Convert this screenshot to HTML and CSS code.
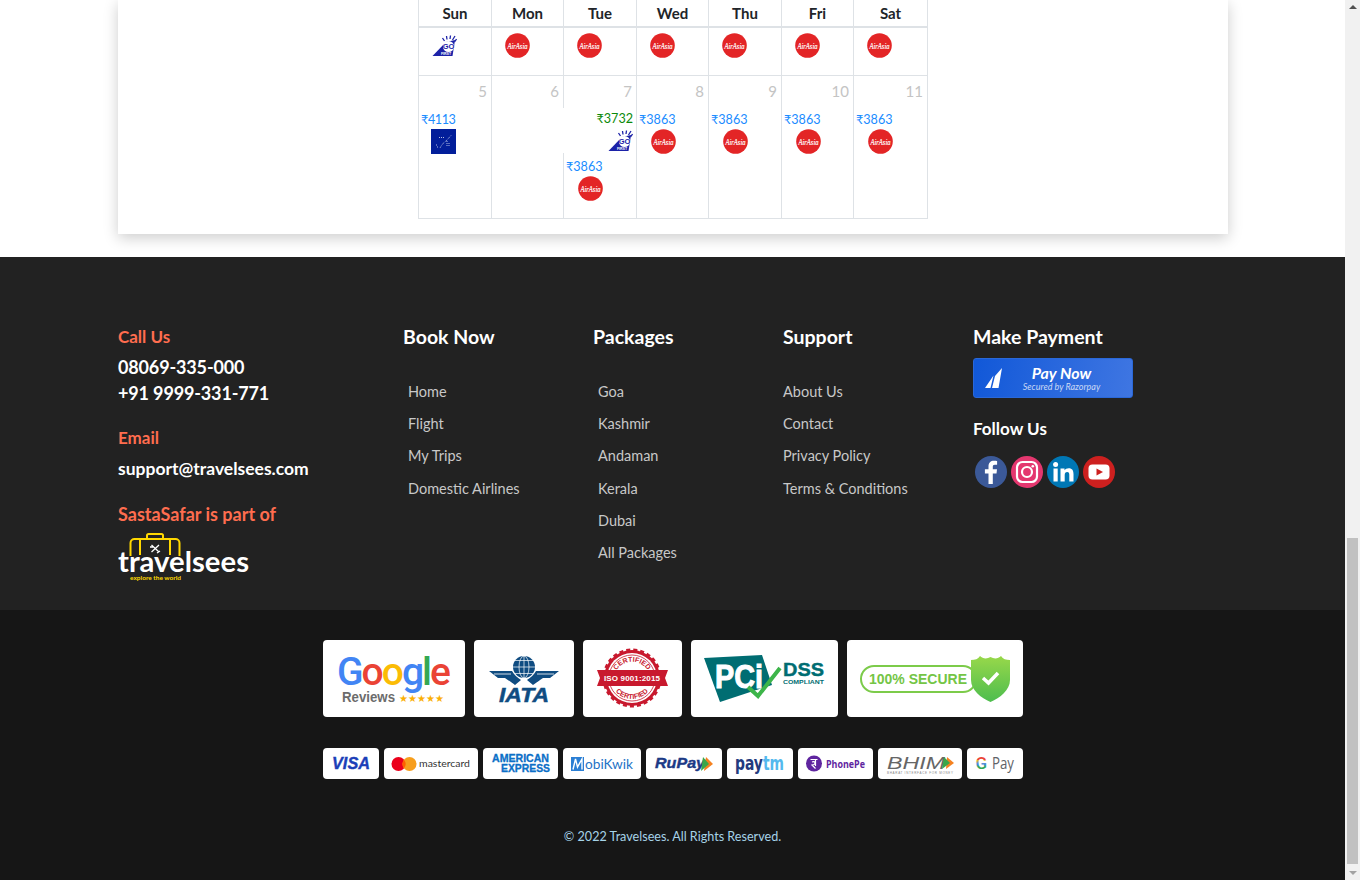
FILE: index.html
```html
<!DOCTYPE html>
<html lang="en">
<head>
    <meta charset="UTF-8">
    <meta name="viewport" content="width=device-width, initial-scale=1.0">
    <title>Travelsees - Fare Calendar</title>
    <link rel="stylesheet" href="styles.css">
</head>
<body>
    <svg class="defs" width="0" height="0">
        <symbol id="airasia" viewBox="0 0 25 25">
            <circle cx="12.500" cy="12.500" r="12.300" fill="#e32526"/>
            <text x="12.500" y="15.500" text-anchor="middle" font-size="9" font-style="italic" font-family="Liberation Serif" fill="#fff" stroke="#fff" stroke-width="0.200" textLength="20" lengthAdjust="spacingAndGlyphs">AirAsia</text>
        </symbol>
        <symbol id="gofirst" viewBox="0 0 25 25">
            <polygon points="0.500,23 20.500,23 23,7 14,9" fill="#1c22a8"/>
            <path d="M12.500 8 L10.500 5 M15 6.500 L14.500 3 M18 6 L18.500 2.500 M20.500 7 L23 3 M22.500 9 L24.500 6" stroke="#1c22a8" stroke-width="1.300"/>
            <circle cx="16.500" cy="13.500" r="5.500" fill="#fff"/>
            <text x="16.500" y="16" text-anchor="middle" font-size="7.500" font-weight="700" font-family="Liberation Sans" fill="#1c22a8">GO</text>
            <text x="14" y="22" text-anchor="middle" font-size="3.500" font-weight="700" font-family="Liberation Sans" fill="#fff">FIRST</text>
        </symbol>
        <symbol id="indigo" viewBox="0 0 25 25">
            <rect width="25" height="25" fill="#021e9a"/>
            <path d="M8 8.500 H14 M20 6.500 L16 11 L11 15.500 L9 19 M5 16 H7 M6 18 H7 M16 12 V18 M18 14 V18" stroke="#dfe4f5" stroke-width="0.800" stroke-dasharray="1 1" fill="none"/>
        </symbol>
    </svg>

    <div class="page">
        <main class="content">
            <section class="calendar-wrap">
                <div class="card">
                    <table class="fare-table">
                        <thead>
                            <tr>
                                <th>Sun</th><th>Mon</th><th>Tue</th><th>Wed</th><th>Thu</th><th>Fri</th><th>Sat</th>
                            </tr>
                        </thead>
                        <tbody>
                            <tr class="logo-row">
                                <td><svg class="airline"><use href="#gofirst"/></svg></td>
                                <td><svg class="airline"><use href="#airasia"/></svg></td>
                                <td><svg class="airline"><use href="#airasia"/></svg></td>
                                <td><svg class="airline"><use href="#airasia"/></svg></td>
                                <td><svg class="airline"><use href="#airasia"/></svg></td>
                                <td><svg class="airline"><use href="#airasia"/></svg></td>
                                <td><svg class="airline"><use href="#airasia"/></svg></td>
                            </tr>
                            <tr class="date-row">
                                <td>
                                    <div class="day">5</div>
                                    <div class="fare fare-tight"><span>₹4113</span><svg class="airline"><use href="#indigo"/></svg></div>
                                </td>
                                <td><div class="day">6</div></td>
                                <td>
                                    <div class="day">7</div>
                                    <div class="fare-best"><span>₹3732</span><svg class="airline"><use href="#gofirst"/></svg></div>
                                    <div class="fare fare-next"><span>₹3863</span><svg class="airline"><use href="#airasia"/></svg></div>
                                </td>
                                <td>
                                    <div class="day">8</div>
                                    <div class="fare"><span>₹3863</span><svg class="airline"><use href="#airasia"/></svg></div>
                                </td>
                                <td>
                                    <div class="day">9</div>
                                    <div class="fare"><span>₹3863</span><svg class="airline"><use href="#airasia"/></svg></div>
                                </td>
                                <td>
                                    <div class="day">10</div>
                                    <div class="fare"><span>₹3863</span><svg class="airline"><use href="#airasia"/></svg></div>
                                </td>
                                <td>
                                    <div class="day">11</div>
                                    <div class="fare"><span>₹3863</span><svg class="airline"><use href="#airasia"/></svg></div>
                                </td>
                            </tr>
                        </tbody>
                    </table>
                </div>
            </section>

            <footer class="footer-top">
                <div class="footer-grid">
                    <div class="contact">
                        <h5 class="accent">Call Us</h5>
                        <a class="phone">08069-335-000</a>
                        <a class="phone">+91 9999-331-771</a>
                        <h5 class="accent email-head">Email</h5>
                        <a class="mail">support@travelsees.com</a>
                        <h5 class="accent part-head">SastaSafar is part of</h5>
                        <svg class="brand" width="132" height="48" viewBox="0 0 132 48">
                            <path d="M29 6 V2.500 a1.500 1.500 0 0 1 1.500-1.500 H43.500 a1.500 1.500 0 0 1 1.500 1.500 V6" fill="none" stroke="#ffd800" stroke-width="2"/>
                            <path d="M12.500 23 V10 a4 4 0 0 1 4-4 H57.500 a4 4 0 0 1 4 4 V23 M22 6 V22 M52 6 V22" fill="none" stroke="#ffd800" stroke-width="2"/>
                            <path d="M33.500 12 L41 19 M41 12 L33.500 19 M32 14 L35 14 M39 20 L42 18" stroke="#fff" stroke-width="1.300"/>
                            <text x="0" y="39" font-family="Lato" font-size="29" font-weight="700" fill="#fff" textLength="131" lengthAdjust="spacingAndGlyphs">travelsees</text>
                            <text x="12" y="46.500" font-family="Lato" font-size="6" font-weight="700" fill="#ffd800" textLength="51" lengthAdjust="spacingAndGlyphs">explore the world</text>
                        </svg>
                    </div>

                    <div>
                        <h4>Book Now</h4>
                        <ul class="links indent">
                            <li>Home</li>
                            <li>Flight</li>
                            <li>My Trips</li>
                            <li>Domestic Airlines</li>
                        </ul>
                    </div>

                    <div>
                        <h4>Packages</h4>
                        <ul class="links indent">
                            <li>Goa</li>
                            <li>Kashmir</li>
                            <li>Andaman</li>
                            <li>Kerala</li>
                            <li>Dubai</li>
                            <li>All Packages</li>
                        </ul>
                    </div>

                    <div>
                        <h4>Support</h4>
                        <ul class="links">
                            <li>About Us</li>
                            <li>Contact</li>
                            <li>Privacy Policy</li>
                            <li>Terms &amp; Conditions</li>
                        </ul>
                    </div>

                    <div>
                        <h4 class="pay-head">Make Payment</h4>
                        <a class="pay-btn">
                            <svg class="pay-logo" width="18" height="20" viewBox="0 0 18 20">
                                <path d="M17 0 L13.500 20 H7 L10 8 Z M8.500 7.500 L5.500 20 H0 Z" fill="#fff"/>
                            </svg>
                            <span class="pay-text">
                                <b>Pay Now</b>
                                <small>Secured by Razorpay</small>
                            </span>
                        </a>
                        <h5 class="follow">Follow Us</h5>
                        <div class="social">
                            <svg width="32" height="32" viewBox="0 0 32 32">
                                <circle cx="16" cy="16" r="16" fill="#3b5998"/>
                                <path d="M17.800 28 V17.500 H21.500 L22 13.200 H17.800 V10.700 C17.800 9.500 18.200 8.700 19.900 8.700 H22.100 V4.900 C21.700 4.800 20.400 4.700 18.900 4.700 C15.700 4.700 13.500 6.700 13.500 10.200 V13.200 H9.900 V17.500 H13.500 V28 Z" fill="#fff"/>
                            </svg>
                            <svg width="32" height="32" viewBox="0 0 32 32">
                                <circle cx="16" cy="16" r="16" fill="#e4376f"/>
                                <rect x="6" y="6" width="20" height="20" rx="5.500" fill="none" stroke="#fff" stroke-width="2.200"/>
                                <circle cx="16" cy="16" r="5" fill="none" stroke="#fff" stroke-width="2.200"/>
                                <circle cx="21.800" cy="10.200" r="1.300" fill="#fff"/>
                            </svg>
                            <svg width="32" height="32" viewBox="0 0 32 32">
                                <circle cx="16" cy="16" r="16" fill="#0077b5"/>
                                <rect x="6.500" y="12.500" width="4.200" height="13" fill="#fff"/>
                                <circle cx="8.600" cy="8.500" r="2.500" fill="#fff"/>
                                <path d="M13.500 12.500 H17.500 V14.300 C18.300 13 19.800 12.200 21.700 12.200 C25.300 12.200 26.500 14.500 26.500 18 V25.500 H22.300 V18.800 C22.300 17.200 21.800 15.900 20.200 15.900 C18.500 15.900 17.700 17.200 17.700 18.900 V25.500 H13.500 Z" fill="#fff"/>
                            </svg>
                            <svg width="32" height="32" viewBox="0 0 32 32">
                                <circle cx="16" cy="16" r="16" fill="#cd201f"/>
                                <rect x="5.500" y="8.500" width="21" height="15" rx="4" fill="#fff"/>
                                <polygon points="13.500,12.500 20,16 13.500,19.500" fill="#cd201f"/>
                            </svg>
                        </div>
                    </div>
                </div>
            </footer>

            <section class="footer-bottom">
                <div class="badges">
                    <div class="badge">
                        <svg width="142" height="77" viewBox="0 0 142 77">
                            <text x="14" y="45" font-family="Roboto" font-weight="500" font-size="39" textLength="114" lengthAdjust="spacing"><tspan fill="#4285f4">G</tspan><tspan fill="#ea4335">o</tspan><tspan fill="#fbbc05">o</tspan><tspan fill="#4285f4">g</tspan><tspan fill="#34a853">l</tspan><tspan fill="#ea4335">e</tspan></text>
                            <text x="19" y="62" font-family="Liberation Sans" font-size="14" font-weight="700" fill="#6c6c6c" textLength="53" lengthAdjust="spacingAndGlyphs">Reviews</text>
                            <text x="76" y="62" font-family="DejaVu Sans" font-size="10" fill="#fbb005" textLength="45" lengthAdjust="spacingAndGlyphs">★★★★★</text>
                        </svg>
                    </div>
                    <div class="badge">
                        <svg width="100" height="77" viewBox="0 0 100 77">
                            <circle cx="50" cy="27" r="11" fill="#0f4c81"/>
                            <path d="M39 27 H61 M50 16 V38 M41 20.500 H59 M41 33.500 H59" stroke="#fff" stroke-width="0.700" fill="none"/>
                            <ellipse cx="50" cy="27" rx="5" ry="11" fill="none" stroke="#fff" stroke-width="0.700"/>
                            <path d="M15 31 H38 C40 35 44 38 47 40 L41 45 C37 42 34 40 31 38 H24 Z M85 31 H62 C60 35 56 38 53 40 L59 45 C63 42 66 40 69 38 H76 Z" fill="#0f4c81"/>
                            <path d="M20 34 H37 M80 34 H63" stroke="#fff" stroke-width="0.800"/>
                            <text x="25" y="62" font-family="Liberation Sans" font-size="20" font-weight="700" font-style="italic" fill="#0f4c81" stroke="#0f4c81" stroke-width="0.500" textLength="50" lengthAdjust="spacingAndGlyphs">IATA</text>
                        </svg>
                    </div>
                    <div class="badge">
                        <svg width="99" height="77" viewBox="0 0 99 77">
                            <circle cx="49" cy="38" r="28" fill="#c8192e" stroke="#c8192e" stroke-width="3" stroke-dasharray="4 3"/>
                            <circle cx="49" cy="38" r="25" fill="#fff"/>
                            <circle cx="49" cy="38" r="23" fill="none" stroke="#c8192e" stroke-width="0.800"/>
                            <path id="arcTop" d="M31 36 A18.500 18.500 0 0 1 67 36" fill="none"/>
                            <path id="arcBot" d="M28 42 A21.500 21.500 0 0 0 70 42" fill="none"/>
                            <text font-family="Liberation Sans" font-size="7" font-weight="700" fill="#c8192e"><textPath href="#arcTop" startOffset="50%" text-anchor="middle">CERTIFIED</textPath></text>
                            <text font-family="Liberation Sans" font-size="7" font-weight="700" fill="#c8192e"><textPath href="#arcBot" startOffset="50%" text-anchor="middle">CERTIFIED</textPath></text>
                            <polygon points="14,30 85,30 82,38 85,46 14,46 17,38" fill="#c8192e"/>
                            <text x="49" y="41" text-anchor="middle" font-family="Liberation Sans" font-size="8" font-weight="700" fill="#fff" textLength="56">ISO 9001:2015</text>
                        </svg>
                    </div>
                    <div class="badge">
                        <svg width="147" height="77" viewBox="0 0 147 77">
                            <polygon points="13,18 71,15 81,45 29,62" fill="#006d72"/>
                            <text x="24" y="48" font-family="Liberation Sans" font-size="33" font-weight="700" fill="#fff" stroke="#fff" stroke-width="1" textLength="48" lengthAdjust="spacingAndGlyphs">PCi</text>
                            <path d="M57 47 L67 56 L89 28" fill="none" stroke="#3db54a" stroke-width="4"/>
                            <text x="92" y="36" font-family="Liberation Sans" font-size="19" font-weight="700" fill="#006d72" stroke="#006d72" stroke-width="0.400" textLength="41" lengthAdjust="spacingAndGlyphs">DSS</text>
                            <text x="92" y="43.500" font-family="Liberation Sans" font-size="6" font-weight="700" fill="#006d72" textLength="41" lengthAdjust="spacingAndGlyphs">COMPLIANT</text>
                        </svg>
                    </div>
                    <div class="badge">
                        <svg width="176" height="77" viewBox="0 0 176 77">
                            <defs>
                                <linearGradient id="shield" x1="0" y1="0" x2="0" y2="1">
                                    <stop offset="0" stop-color="#98d84a"/>
                                    <stop offset="1" stop-color="#4dbd4e"/>
                                </linearGradient>
                            </defs>
                            <rect x="14" y="26" width="115" height="26" rx="13" fill="#fff" stroke="#7ccb4a" stroke-width="2"/>
                            <text x="22" y="44" font-family="Liberation Sans" font-size="15" font-weight="700" fill="#74c545" textLength="98" lengthAdjust="spacingAndGlyphs">100% SECURE</text>
                            <path d="M124 20 C128 20 131 19 133 16 C136 19 140 19 143.500 17 C147 19 151 19 154 16 C156 19 159 20 163 20 V40 C163 50 153 58 143.500 62 C134 58 124 50 124 40 Z" fill="url(#shield)"/>
                            <path d="M136 38 L141.500 43 L151 33" fill="none" stroke="#fff" stroke-width="3.500"/>
                        </svg>
                    </div>
                </div>

                <div class="payments">
                    <div class="badge">
                        <svg width="56" height="31" viewBox="0 0 56 31">
                            <text x="9" y="21" font-family="Liberation Sans" font-size="17" font-weight="700" font-style="italic" fill="#1b3fb8" stroke="#1b3fb8" stroke-width="0.400" textLength="38" lengthAdjust="spacingAndGlyphs">VISA</text>
                        </svg>
                    </div>
                    <div class="badge">
                        <svg width="94" height="31" viewBox="0 0 94 31">
                            <circle cx="14.500" cy="16" r="7" fill="#eb001b"/>
                            <circle cx="25.500" cy="16" r="7" fill="#f79e1b"/>
                            <path d="M20 11.700 A7 7 0 0 1 20 20.300 A7 7 0 0 1 20 11.700 Z" fill="#ff5f00"/>
                            <text x="35" y="19" font-family="Lato" font-size="10" fill="#333" textLength="51" lengthAdjust="spacingAndGlyphs">mastercard</text>
                        </svg>
                    </div>
                    <div class="badge">
                        <svg width="75" height="31" viewBox="0 0 75 31">
                            <text x="9" y="14" font-family="Liberation Sans" font-size="10" font-weight="700" fill="#0b6fc7" stroke="#0b6fc7" stroke-width="0.300" textLength="57" lengthAdjust="spacingAndGlyphs">AMERICAN</text>
                            <text x="18" y="23.500" font-family="Liberation Sans" font-size="10" font-weight="700" fill="#0b6fc7" stroke="#0b6fc7" stroke-width="0.300" textLength="49" lengthAdjust="spacingAndGlyphs">EXPRESS</text>
                        </svg>
                    </div>
                    <div class="badge">
                        <svg width="78" height="31" viewBox="0 0 78 31">
                            <rect x="8" y="9" width="13" height="14" fill="#2b7fd4"/>
                            <path d="M10 21.500 L12.500 11 L14.500 19 L19 11 V21.500" fill="none" stroke="#fff" stroke-width="1.400"/>
                            <text x="22" y="21" font-family="Lato" font-size="13" fill="#1f73c6" textLength="48" lengthAdjust="spacingAndGlyphs">obiKwik</text>
                        </svg>
                    </div>
                    <div class="badge">
                        <svg width="76" height="31" viewBox="0 0 76 31">
                            <text x="9" y="20" font-family="Liberation Sans" font-size="15" font-weight="700" font-style="italic" fill="#1c3a86" stroke="#1c3a86" stroke-width="0.400" textLength="50" lengthAdjust="spacingAndGlyphs">RuPay</text>
                            <polygon points="60,9 67,16 58,23" fill="#f58220"/>
                            <polygon points="57,9 63,16 55,23" fill="#3aa648"/>
                        </svg>
                    </div>
                    <div class="badge">
                        <svg width="66" height="31" viewBox="0 0 66 31">
                            <text x="8" y="22" font-family="DejaVu Sans" font-size="19" font-weight="700" textLength="49" lengthAdjust="spacingAndGlyphs"><tspan fill="#233a7e">pay</tspan><tspan fill="#54b9ee">tm</tspan></text>
                        </svg>
                    </div>
                    <div class="badge">
                        <svg width="75" height="31" viewBox="0 0 75 31">
                            <circle cx="16" cy="15.500" r="8" fill="#5f259f"/>
                            <path d="M12.500 11.500 H19.500 M14 14 C17 13 18 15 16 16.500 L14 17 L17.500 20.500 M17.500 11.500 V18" fill="none" stroke="#fff" stroke-width="1.200"/>
                            <text x="28" y="20" font-family="Open Sans" font-size="11" font-weight="700" fill="#5f259f" textLength="39" lengthAdjust="spacingAndGlyphs">PhonePe</text>
                        </svg>
                    </div>
                    <div class="badge">
                        <svg width="84" height="31" viewBox="0 0 84 31">
                            <text x="9" y="21" font-family="Liberation Sans" font-size="17" font-style="italic" fill="#666" textLength="58" lengthAdjust="spacingAndGlyphs">BHIM</text>
                            <polygon points="69,9 76,15 68,21" fill="#f58220"/>
                            <polygon points="66,9 72,15 64,21" fill="#3aa648"/>
                            <text x="9" y="26" font-family="Liberation Sans" font-size="3" fill="#888" textLength="66">BHARAT INTERFACE FOR MONEY</text>
                        </svg>
                    </div>
                    <div class="badge">
                        <svg width="56" height="31" viewBox="0 0 56 31">
                            <defs>
                                <linearGradient id="gmark" x1="0" y1="0" x2="0" y2="1">
                                    <stop offset="0.350" stop-color="#ea4335"/>
                                    <stop offset="0.350" stop-color="#fbbc05"/>
                                    <stop offset="0.550" stop-color="#4285f4"/>
                                    <stop offset="0.700" stop-color="#34a853"/>
                                </linearGradient>
                            </defs>
                            <text x="8.500" y="21" font-family="Roboto" font-size="17" font-weight="500" fill="url(#gmark)">G</text>
                            <text x="25" y="21" font-family="Open Sans" font-size="16" fill="#5f6368" textLength="22" lengthAdjust="spacingAndGlyphs">Pay</text>
                        </svg>
                    </div>
                </div>

                <p class="copy">© 2022 Travelsees. All Rights Reserved.</p>
            </section>
        </main>

        <div class="scrollbar">
            <span class="arrow-up"></span>
            <span class="track"><span class="thumb"></span></span>
            <span class="arrow-down"></span>
        </div>
    </div>
</body>
</html>
```

FILE: styles.css
```css
* {
    box-sizing: border-box;
}
html, body {
    margin: 0;
    padding: 0;
    height: 880px;
    overflow: hidden;
}
body {
    font-family: 'Lato', sans-serif;
    background: #fff;
}
h4, h5, p, ul {
    margin: 0;
    padding: 0;
}
.defs {
    display: none;
}
.page {
    display: flex;
    height: 880px;
}
.content {
    width: 1345px;
    display: flex;
    flex-direction: column;
}

/* calendar */
.calendar-wrap {
    height: 257px;
    padding-left: 118px;
}
.card {
    width: 1110px;
    height: 234px;
    background: #fff;
    box-shadow: 0 4px 14px rgba(0, 0, 0, 0.2);
}
.fare-table {
    width: 509px;
    margin-left: 300px;
    table-layout: fixed;
    border-collapse: collapse;
    color: #212529;
}
.fare-table th {
    width: 72px;
    height: 27px;
    padding: 0;
    font-size: 15px;
    font-weight: 700;
    border: 1px solid #dee2e6;
    border-top: 0;
    border-bottom: 2px solid #dee2e6;
}
.fare-table th:nth-child(odd) {
    width: 73px;
}
.fare-table th:last-child {
    width: 74px;
}
.fare-table td {
    padding: 0;
    vertical-align: top;
    border: 1px solid #dee2e6;
}
.logo-row td {
    height: 48px;
    padding: 5px 0 0 13px;
}
.date-row td {
    height: 143px;
}
.airline {
    display: block;
    width: 25px;
    height: 25px;
}
.day {
    height: 32px;
    padding: 5px 4px 0 0;
    text-align: right;
    font-size: 15px;
    line-height: 20px;
    color: #c4c4c4;
}
.fare {
    display: flex;
    flex-direction: column;
    align-items: flex-end;
    width: fit-content;
    margin-left: 2px;
    padding-top: 2px;
    font-size: 12.6px;
    line-height: 19px;
    color: #1a8cff;
}
.fare-tight {
    letter-spacing: -0.4px;
}
.fare-next {
    margin-top: 2px;
}
.fare-best {
    display: flex;
    flex-direction: column;
    align-items: flex-end;
    height: 45px;
    margin: 0 3px 0 -40px;
    padding-top: 1px;
    background: #fff;
    font-size: 12.6px;
    line-height: 19px;
    color: #0a8a0a;
    position: relative;
}

/* footer */
.footer-top {
    height: 353px;
    background: #222;
    padding: 68px 0 0 118px;
}
.footer-grid {
    display: grid;
    grid-template-columns: 285px 190px 190px 190px 255px;
    color: #fff;
}
h4 {
    font-size: 19.5px;
    line-height: 26px;
    font-weight: 700;
    margin-top: -1px;
}
.accent {
    font-size: 17px;
    line-height: 24px;
    font-weight: 700;
    color: #ff6d4f;
}
.phone {
    display: block;
    font-size: 18px;
    line-height: 26px;
    font-weight: 700;
    letter-spacing: -0.15px;
    color: #fff;
}
.phone:first-of-type {
    margin-top: 5px;
}
.email-head {
    margin-top: 20px;
}
.mail {
    display: block;
    margin-top: 7px;
    font-size: 17.5px;
    line-height: 24px;
    font-weight: 700;
    color: #fff;
}
.part-head {
    margin-top: 21px;
    font-size: 18px;
}
.brand {
    display: block;
    margin-top: 7px;
}
.links {
    list-style: none;
    margin-top: 29.5px;
}
.links.indent {
    padding-left: 5px;
}
.links li {
    height: 32.4px;
    font-size: 14.5px;
    line-height: 24px;
    color: #c8c8c8;
}
.pay-btn {
    display: flex;
    align-items: center;
    width: 160px;
    height: 40px;
    margin-top: 8px;
    padding-left: 11px;
    border: 1px solid #2a68d8;
    border-radius: 3px;
    background: linear-gradient(100deg, #1158d8, #3f76e2);
}
.pay-text {
    flex: 1;
    display: flex;
    flex-direction: column;
    align-items: center;
    padding-right: 12px;
    font-style: italic;
}
.pay-text b {
    font-size: 16px;
    line-height: 16px;
}
.pay-text small {
    font-size: 9px;
    line-height: 11px;
    color: #c9d8f5;
}
.follow {
    margin-top: 19px;
    font-size: 17px;
    line-height: 24px;
    font-weight: 700;
}
.social {
    display: flex;
    gap: 4px;
    margin: 15px 0 0 2px;
}

/* badges */
.footer-bottom {
    flex: 1;
    background: #161616;
    padding-top: 30px;
}
.badges, .payments {
    display: flex;
    justify-content: center;
}
.badges {
    gap: 9px;
}
.payments {
    gap: 5px;
    margin-top: 31px;
}
.badge {
    background: #fff;
    border-radius: 4px;
    overflow: hidden;
}
.badge svg {
    display: block;
}
.copy {
    margin-top: 48px;
    text-align: center;
    font-size: 12.6px;
    line-height: 20px;
    color: #a6d3e8;
}

/* scroll bar of the window */
.scrollbar {
    width: 15px;
    display: flex;
    flex-direction: column;
    align-items: center;
    background: #f1f1f1;
}
.track {
    flex: 1;
    width: 100%;
    padding: 524px 2px 0;
}
.thumb {
    display: block;
    height: 326px;
    background: #c1c1c1;
}
.arrow-up, .arrow-down {
    flex: none;
    width: 0;
    height: 0;
    margin: 5px 0;
    border-left: 4px solid transparent;
    border-right: 4px solid transparent;
}
.arrow-up {
    border-bottom: 4px solid #505050;
}
.arrow-down {
    border-top: 4px solid #a3a3a3;
}
```
